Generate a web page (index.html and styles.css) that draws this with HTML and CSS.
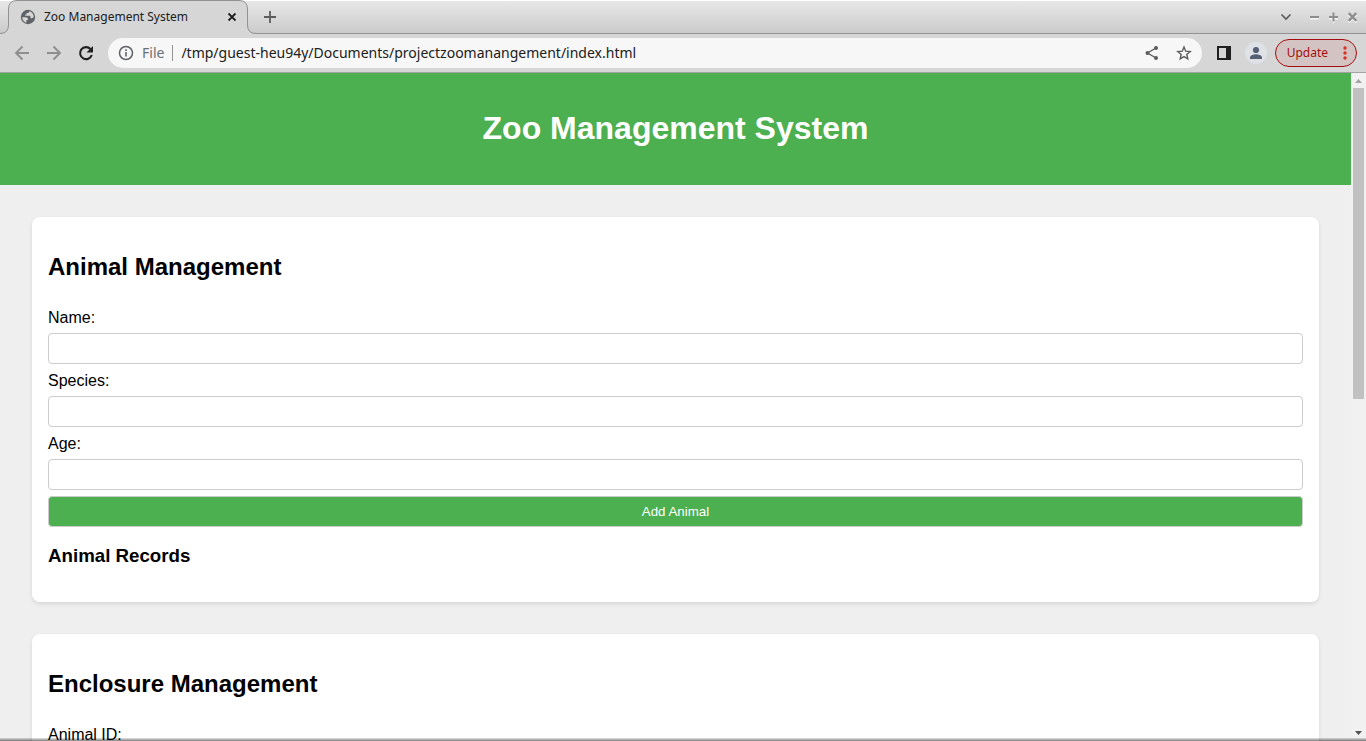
FILE: index.html
```html
<!DOCTYPE html>
<html lang="en">
<head>
<meta charset="utf-8">
<title>Zoo Management System</title>
<link rel="stylesheet" href="styles.css">
</head>
<body>
<div class="tabstrip">
  <div class="tab">
    <svg class="tab-shape" width="256" height="34" viewBox="0 0 256 34" aria-hidden="true"><path d="M0 33.5Q8.500 33.500 8.500 25V9Q8.500 .5 17 .5H239Q247.500 .5 247.500 9V25Q247.500 33.500 256 33.500V34H0Z" fill="#d6d6d6"/><path d="M0 33.500Q8.500 33.500 8.500 25V9Q8.500 .5 17 .5H239Q247.500 .5 247.500 9V25Q247.500 33.500 256 33.500" fill="none" stroke="#929292"/></svg>
    <svg class="icon tab-globe" width="16" height="16" viewBox="0 0 16 16" aria-hidden="true"><circle cx="8" cy="8" r="7.200" fill="#5f6368"/><path d="M2.200 8.300h3.600c1.300 0 2.100.7 2.100 1.800v.9h-1.500v2.800C4.200 13.300 2.200 11 2.200 8.300ZM9.400 2.300c-.1 1.100-.7 1.700-1.700 1.700H6.600v1.500H5.200v1.300h4c.9 0 1.400.6 1.400 1.300v1.100h1.300c.8 0 1.300-.4 1.800-1.100.2-2.600-1.700-5.200-4.300-5.800Z" fill="#d6d6d6"/></svg>
    <span class="tab-title">Zoo Management System</span>
    <button class="icon-button tab-close" aria-label="Close tab"><svg width="16" height="16" viewBox="0 0 16 16"><path d="M4.500 4.500l7 7M11.500 4.500l-7 7" stroke="#202020" stroke-width="1.800"/></svg></button>
  </div>
  <button class="icon-button new-tab" aria-label="New tab"><svg width="16" height="16" viewBox="0 0 16 16"><path d="M8 2v12M2 8h12" stroke="#5c5c5c" stroke-width="1.800"/></svg></button>
  <div class="window-buttons">
    <button class="icon-button tab-search" aria-label="Search tabs"><svg width="12" height="16" viewBox="0 0 12 16"><path d="M1.500 5.500L6 10 10.500 5.500" fill="none" stroke="#5c5c5c" stroke-width="1.700"/></svg></button>
    <button class="icon-button" aria-label="Minimize"><svg width="11" height="16" viewBox="0 0 11 16"><path d="M1 9.500h9" stroke="#f5f5f5" stroke-width="2"/><path d="M1 8h9" stroke="#8e8e8e" stroke-width="2"/></svg></button>
    <button class="icon-button" aria-label="Maximize"><svg width="11" height="16" viewBox="0 0 11 16"><path d="M1 9.500h9M5.500 5v9" stroke="#f5f5f5" stroke-width="2"/><path d="M1 8h9M5.500 3.500v9" stroke="#8e8e8e" stroke-width="2"/></svg></button>
    <button class="icon-button" aria-label="Close window"><svg width="11" height="16" viewBox="0 0 11 16"><path d="M1.500 5.500l8 8M9.500 5.500l-8 8" stroke="#f5f5f5" stroke-width="2.200"/><path d="M1.700 4.200l7.600 7.600M9.300 4.200l-7.600 7.600" stroke="#8e8e8e" stroke-width="2.400"/></svg></button>
  </div>
</div>
<div class="toolbar">
  <button class="icon-button" aria-label="Back"><svg width="16" height="16" viewBox="0 0 16 16"><path d="M15 8H2M8.500 1.500L2 8l6.500 6.500" fill="none" stroke="#8e8e8e" stroke-width="1.900"/></svg></button>
  <button class="icon-button" aria-label="Forward"><svg width="16" height="16" viewBox="0 0 16 16"><path d="M1 8h13M7.500 1.500L14 8l-6.500 6.500" fill="none" stroke="#8e8e8e" stroke-width="1.900"/></svg></button>
  <button class="icon-button" aria-label="Reload"><svg width="16" height="16" viewBox="0 0 16 16"><path d="M13.800 10A6 6 0 1 1 12.500 4" fill="none" stroke="#202020" stroke-width="2.100"/><path d="M15 1v6.500H8.500Z" fill="#202020"/></svg></button>
  <div class="omnibox">
    <svg class="icon" width="16" height="16" viewBox="0 0 16 16" aria-hidden="true"><circle cx="8" cy="8" r="6.500" fill="none" stroke="#5f6368" stroke-width="1.500"/><path d="M8 7v4.500M8 4.300v1.600" stroke="#5f6368" stroke-width="1.600"/></svg>
    <span class="scheme">File</span>
    <input class="address" type="text" aria-label="Address" value="/tmp/guest-heu94y/Documents/projectzoomanangement/index.html">
    <button class="icon-button" aria-label="Share"><svg width="16" height="16" viewBox="0 0 16 16"><path d="M12 3L3.500 8l8.500 5" fill="none" stroke="#5c5c5c" stroke-width="1.400"/><g fill="#5c5c5c"><circle cx="12" cy="3" r="2"/><circle cx="3.500" cy="8" r="2"/><circle cx="12" cy="13" r="2"/></g></svg></button>
    <button class="icon-button" aria-label="Bookmark this tab"><svg width="16" height="16" viewBox="0 0 16 16"><path d="M8 2.100l1.700 4.100 4.500.4-3.400 2.900 1 4.400L8 11.600l-3.800 2.300 1-4.400-3.400-2.900 4.500-.4Z" fill="none" stroke="#5c5c5c" stroke-width="1.400"/></svg></button>
  </div>
  <button class="icon-button side-panel" aria-label="Side panel"><svg width="14" height="14" viewBox="0 0 14 14"><path d="M0 0h14v14H0ZM2 2v10h7V2Z" fill="#202020" fill-rule="evenodd"/></svg></button>
  <button class="icon-button" aria-label="Profile"><svg width="22" height="22" viewBox="0 0 22 22"><circle cx="11" cy="11" r="11" fill="#dee1e6"/><circle cx="11" cy="8" r="3.100" fill="#566074"/><path d="M5 17v-1.500c0-2 4-3.200 6-3.200s6 1.200 6 3.200V17Z" fill="#566074"/></svg></button>
  <button class="update">Update<svg width="4" height="14" viewBox="0 0 4 14" aria-hidden="true"><g fill="#d93025"><circle cx="2" cy="2" r="1.700"/><circle cx="2" cy="7" r="1.700"/><circle cx="2" cy="12" r="1.700"/></g></svg></button>
</div>
<div class="viewport">
  <div class="page">
    <header class="page-header"><h1>Zoo Management System</h1></header>
    <main>
      <section class="card">
        <h2>Animal Management</h2>
        <form class="fields">
          <label for="name">Name:</label>
          <input id="name" type="text">
          <label for="species">Species:</label>
          <input id="species" type="text">
          <label for="age">Age:</label>
          <input id="age" type="text">
          <button type="button">Add Animal</button>
        </form>
        <h3>Animal Records</h3>
      </section>
      <section class="card">
        <h2>Enclosure Management</h2>
        <form class="fields">
          <label for="animal-id">Animal ID:</label>
          <input id="animal-id" type="text">
        </form>
      </section>
    </main>
  </div>
  <div class="scrollbar" aria-hidden="true">
    <svg width="15" height="15" viewBox="0 0 15 15"><path d="M7.500 6l3.500 4H4Z" fill="#a3a3a3"/></svg>
    <div class="track"><div class="thumb"></div></div>
    <svg width="15" height="15" viewBox="0 0 15 15"><path d="M7.500 9L11 5H4Z" fill="#505050"/></svg>
  </div>
</div>
</body>
</html>
```

FILE: styles.css
```css
* {
  box-sizing: border-box;
}

body {
  margin: 0;
  height: 100vh;
  display: flex;
  flex-direction: column;
  overflow: hidden;
  font-family: "Liberation Sans", Arial, sans-serif;
  background: #efefef;
}

svg {
  display: block;
  flex: none;
}

.icon-button {
  display: flex;
  flex: none;
  padding: 0;
  border: 0;
  background: none;
}

/* Browser window */
.tabstrip {
  display: flex;
  align-items: center;
  flex: none;
  height: 34px;
  border-top: 1px solid #fff;
  border-bottom: 1px solid #929292;
  background: linear-gradient(#e7e7e7, #cbcbcb);
  font-family: "Noto Sans", sans-serif;
}

.tab {
  position: relative;
  display: flex;
  align-items: center;
  flex: none;
  width: 256px;
  height: 32px;
  padding: 0 16px 0 20px;
}

.tab-shape {
  position: absolute;
  left: 0;
  top: -1px;
}

.tab-globe,
.tab-title,
.tab-close {
  position: relative;
}

.tab-title {
  flex: 1;
  margin-left: 8px;
  font-size: 12px;
  line-height: 16px;
  color: #202020;
  white-space: nowrap;
}

.new-tab {
  margin-left: 6px;
}

.window-buttons {
  display: flex;
  gap: 8px;
  margin-left: auto;
  padding-right: 8px;
}

.tab-search {
  margin-right: 9px;
}

.toolbar {
  display: flex;
  align-items: center;
  flex: none;
  gap: 16px;
  height: 39px;
  padding: 0 9px 0 14px;
  border-bottom: 1px solid #a3a3a3;
  background: #d6d6d6;
  font-family: "Noto Sans", sans-serif;
}

.omnibox {
  display: flex;
  align-items: center;
  flex: 1;
  gap: 16px;
  height: 30px;
  margin-left: -2px;
  padding: 0 10px;
  border-radius: 15px;
  background: #f7f7f7;
  font-size: 14px;
}

.scheme {
  margin-left: -8px;
  padding-right: 8px;
  border-right: 1px solid #929292;
  line-height: 16px;
  color: #6b7075;
}

.address {
  flex: 1;
  min-width: 0;
  margin-left: -8px;
  padding: 0 0 2px;
  border: 0;
  background: none;
  font: inherit;
  color: #202020;
}

.side-panel {
  margin: 0 -2px 0 -1px;
}

.update {
  display: flex;
  align-items: center;
  gap: 15px;
  height: 28px;
  margin-left: -8px;
  padding: 0 9px 0 11px;
  border: 1px solid #a50e0e;
  border-radius: 14px;
  background: #d4c3c3;
  font: 12px/16px "Noto Sans", sans-serif;
  color: #a50e0e;
}

.viewport {
  position: relative;
  display: flex;
  flex: 1;
  min-height: 0;
}

/* Edge shadow along the bottom of the window */
.viewport::after {
  content: "";
  position: absolute;
  inset: auto 0 0;
  height: 3px;
  background: linear-gradient(rgba(0, 0, 0, 0.1), rgba(0, 0, 0, 0.5));
}

.scrollbar {
  display: flex;
  flex-direction: column;
  flex: none;
  width: 15px;
  background: #f1f1f1;
}

.track {
  flex: 1;
  padding: 0 2px;
}

.thumb {
  height: calc(49% - 2px);
  background: #c1c1c1;
}

/* Page */
.page {
  flex: 1;
  min-width: 0;
  overflow: hidden;
}

.page-header {
  padding: 16px 16px 17px;
  background: #4caf50;
  color: #fff;
  text-align: center;
}

h1 {
  margin: 21px 0;
  font-size: 32px;
  line-height: 37px;
}

main {
  display: grid;
  gap: 32px;
  padding: 32px;
}

.card {
  padding: 16px;
  border-radius: 8px;
  background: #fff;
  box-shadow: 0 2px 4px rgba(0, 0, 0, 0.1);
}

h2 {
  margin: 20px 0 27px;
  font-size: 24px;
  line-height: 27px;
}

h3 {
  margin: 18px 0 20px;
  line-height: 21px;
}

.fields {
  display: flex;
  flex-direction: column;
  gap: 6px;
  font-size: 16px;
  line-height: 18px;
}

.fields label {
  padding-top: 2px;
}

.fields input,
.fields button {
  width: 100%;
  height: 31px;
  padding: 0 8px;
  border: 1px solid #ccc;
  border-radius: 4px;
  background: #fff;
  font: smaller "Liberation Sans", Arial, sans-serif;
}

.fields button {
  background: #4caf50;
  color: #fff;
}
```
